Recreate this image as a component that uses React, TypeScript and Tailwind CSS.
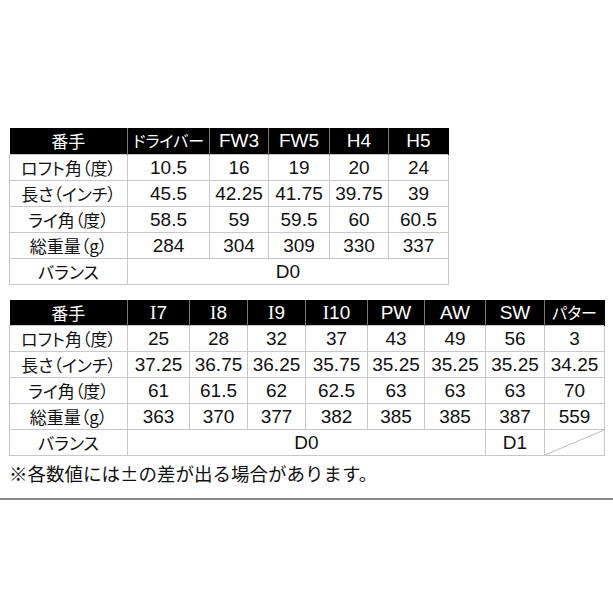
import React from "react";

const JP = "font-['Noto_Sans_CJK_JP','Noto_Sans',sans-serif] [font-feature-settings:'palt']";
const NUM = "font-['Liberation_Sans','Noto_Sans_CJK_JP',sans-serif]";
const CELL = "border border-[#c8c8c8] text-center leading-none p-0 whitespace-nowrap";

type Row = { label: string; values: React.ReactNode[] };

function Roman({ n }: { n: string }) {
  return (
    <span>
      <span className="font-['Liberation_Serif',serif] text-[19px]">I</span>
      {n}
    </span>
  );
}

function Header({ items }: { items: React.ReactNode[] }) {
  return (
    <thead>
      <tr className="h-[26px]">
        <th className={`bg-black text-white font-normal text-[17px] leading-none p-0 border-r border-[#777] ${JP}`}>
          番手
        </th>
        {items.map((h, i) => (
          <th
            key={i}
            className={`bg-black text-white font-normal text-[19px] leading-none p-0 border-x border-[#777] last:border-r-black whitespace-nowrap ${NUM}`}
          >
            {h}
          </th>
        ))}
      </tr>
    </thead>
  );
}

function Body({ rows }: { rows: Row[] }) {
  return (
    <>
      {rows.map((r) => (
        <tr key={r.label} className="h-[26px]">
          <td className={`${CELL} text-[17px] ${JP}`}>{r.label}</td>
          {r.values.map((v, i) => (
            <td key={i} className={`${CELL} text-[19px] ${NUM}`}>
              {v}
            </td>
          ))}
        </tr>
      ))}
    </>
  );
}

const rows1: Row[] = [
  { label: "ロフト角（度）", values: ["10.5", "16", "19", "20", "24"] },
  { label: "長さ（インチ）", values: ["45.5", "42.25", "41.75", "39.75", "39"] },
  { label: "ライ角（度）", values: ["58.5", "59", "59.5", "60", "60.5"] },
  { label: "総重量（g）", values: ["284", "304", "309", "330", "337"] },
];

const rows2: Row[] = [
  { label: "ロフト角（度）", values: ["25", "28", "32", "37", "43", "49", "56", "3"] },
  {
    label: "長さ（インチ）",
    values: ["37.25", "36.75", "36.25", "35.75", "35.25", "35.25", "35.25", "34.25"],
  },
  { label: "ライ角（度）", values: ["61", "61.5", "62", "62.5", "63", "63", "63", "70"] },
  { label: "総重量（g）", values: ["363", "370", "377", "382", "385", "385", "387", "559"] },
];

export default function App() {
  return (
    <div className="w-[613px] h-[613px] bg-white overflow-hidden text-[#111]">
      <div className="pt-[128px] pl-[9px]">
        <table className="table-fixed border-collapse w-[439px]">
          <colgroup>
            <col className="w-[118px]" />
            <col className="w-[82px]" />
            <col className="w-[59px]" />
            <col className="w-[61px]" />
            <col className="w-[59px]" />
            <col className="w-[60px]" />
          </colgroup>
          <Header
            items={[
              <span className={`text-[16px] ${JP}`}>ドライバー</span>,
              "FW3",
              "FW5",
              "H4",
              "H5",
            ]}
          />
          <tbody>
            <Body rows={rows1} />
            <tr className="h-[26px]">
              <td className={`${CELL} text-[17px] ${JP}`}>バランス</td>
              <td colSpan={5} className={`${CELL} text-[19px] ${NUM}`}>
                D0
              </td>
            </tr>
          </tbody>
        </table>
      </div>

      <div className="pt-[15px] pl-[9px]">
        <table className="table-fixed border-collapse w-[595px]">
          <colgroup>
            <col className="w-[118px]" />
            <col className="w-[62px]" />
            <col className="w-[58px]" />
            <col className="w-[58px]" />
            <col className="w-[62px]" />
            <col className="w-[57px]" />
            <col className="w-[61px]" />
            <col className="w-[59px]" />
            <col className="w-[60px]" />
          </colgroup>
          <Header
            items={[
              <Roman n="7" />,
              <Roman n="8" />,
              <Roman n="9" />,
              <Roman n="10" />,
              "PW",
              "AW",
              "SW",
              <span className={`text-[16px] ${JP}`}>パター</span>,
            ]}
          />
          <tbody>
            <Body rows={rows2} />
            <tr className="h-[26px]">
              <td className={`${CELL} text-[17px] ${JP}`}>バランス</td>
              <td colSpan={6} className={`${CELL} text-[19px] ${NUM}`}>
                D0
              </td>
              <td className={`${CELL} text-[19px] ${NUM}`}>D1</td>
              <td className="border border-[#c8c8c8] p-0 relative">
                <svg
                  className="absolute inset-0 w-full h-full"
                  viewBox="0 0 60 26"
                  preserveAspectRatio="none"
                >
                  <line x1="0" y1="26" x2="60" y2="0" stroke="#bbb" strokeWidth="1" />
                </svg>
              </td>
            </tr>
          </tbody>
        </table>
      </div>

      <div className={`pl-[9px] pt-[4px] text-[18.5px] leading-[26px] ${JP} [font-feature-settings:normal]`}>
        ※各数値には±の差が出る場合があります。
      </div>
      <div className="mt-[12px] h-[2px] bg-[#8a8a8a] w-full" />
    </div>
  );
}
